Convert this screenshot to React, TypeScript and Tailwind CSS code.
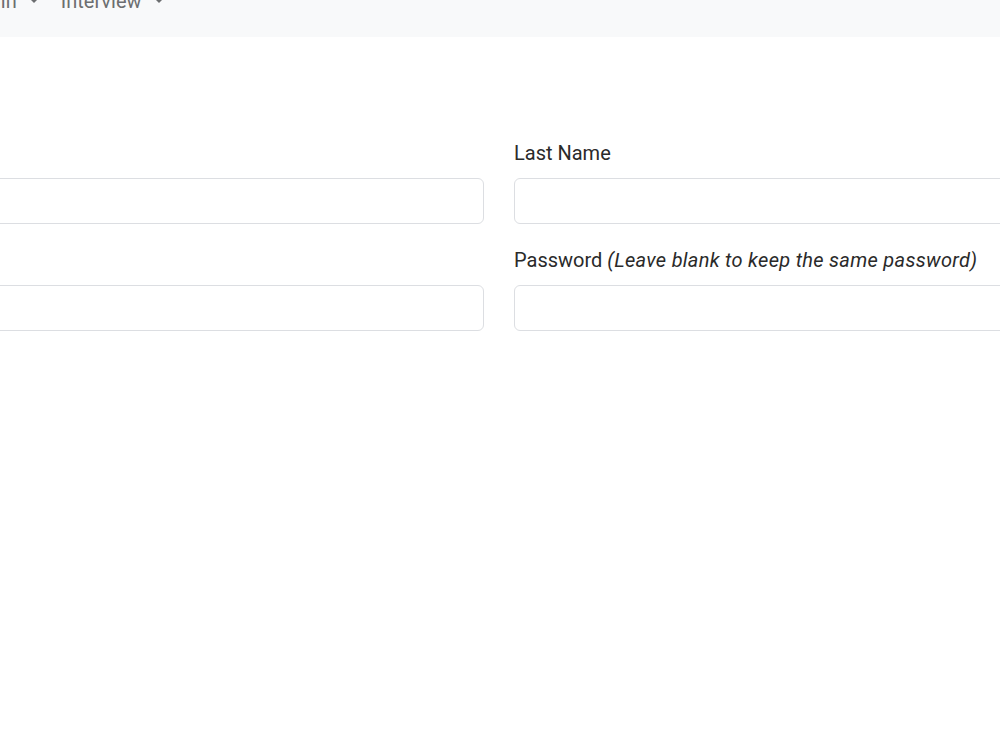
import React from 'react';

const NavItem: React.FC<{ label: string }> = ({ label }) => (
  <a className="whitespace-nowrap text-[20px] leading-[30px] text-[#6c6e70]">
    {label}
    <span className="ml-[11px] inline-block h-0 w-0 border-x-[6px] border-t-[6px] border-x-transparent border-t-current align-[0.255em]" />
  </a>
);

const Field: React.FC<{ label: React.ReactNode }> = ({ label }) => (
  <div className="flex flex-col">
    <label className="mb-[11px] text-[20px] leading-[27px] text-[#2a2a2a]">{label}</label>
    <input className="h-[46px] w-full rounded-[6px] border border-[#dcdee2] bg-white px-3 outline-none" />
  </div>
);

export default function App() {
  return (
    <div className="h-[750px] w-[1000px] overflow-hidden bg-white" style={{ fontFamily: 'Roboto, "Liberation Sans", sans-serif' }}>
      <nav className="ml-[-41px] mt-[-35px] flex h-[72px] items-center gap-[21px] bg-[#f8f9fa]">
        <NavItem label="Admin" />
        <NavItem label="Interview" />
      </nav>
      <form className="ml-[-470px] mt-[103px] grid w-[1938px] grid-cols-2 gap-x-[30px] gap-y-[23px]">
        <Field label="First Name" />
        <Field label="Last Name" />
        <Field label="Email" />
        <Field
          label={
            <>
              Password <em className="italic tracking-[0.3px]">(Leave blank to keep the same password)</em>
            </>
          }
        />
      </form>
    </div>
  );
}
